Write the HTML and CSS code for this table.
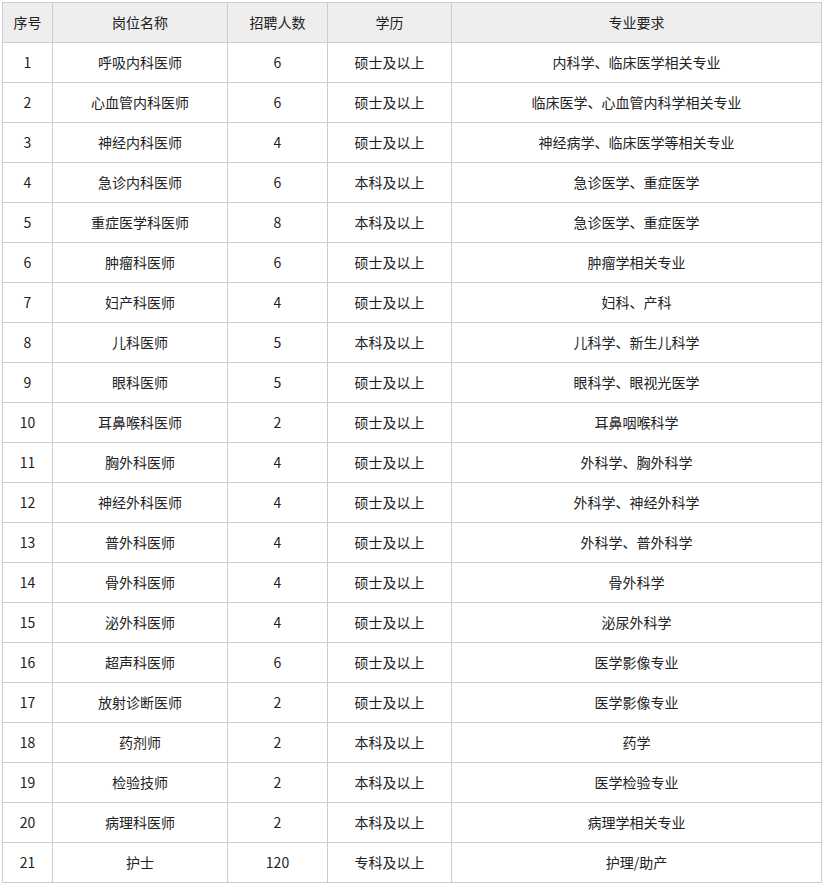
FILE: index.html
```html
<!DOCTYPE html>
<html lang="zh">
<head>
<meta charset="utf-8">
<link rel="stylesheet" href="styles.css">
</head>
<body>
<table class="jobs">
<colgroup>
<col class="c-no"><col class="c-name"><col class="c-num"><col class="c-edu"><col class="c-major">
</colgroup>
<thead>
<tr><th>序号</th><th>岗位名称</th><th>招聘人数</th><th>学历</th><th>专业要求</th></tr>
</thead>
<tbody>
<tr><td>1</td><td>呼吸内科医师</td><td>6</td><td>硕士及以上</td><td>内科学、临床医学相关专业</td></tr>
<tr><td>2</td><td>心血管内科医师</td><td>6</td><td>硕士及以上</td><td>临床医学、心血管内科学相关专业</td></tr>
<tr><td>3</td><td>神经内科医师</td><td>4</td><td>硕士及以上</td><td>神经病学、临床医学等相关专业</td></tr>
<tr><td>4</td><td>急诊内科医师</td><td>6</td><td>本科及以上</td><td>急诊医学、重症医学</td></tr>
<tr><td>5</td><td>重症医学科医师</td><td>8</td><td>本科及以上</td><td>急诊医学、重症医学</td></tr>
<tr><td>6</td><td>肿瘤科医师</td><td>6</td><td>硕士及以上</td><td>肿瘤学相关专业</td></tr>
<tr><td>7</td><td>妇产科医师</td><td>4</td><td>硕士及以上</td><td>妇科、产科</td></tr>
<tr><td>8</td><td>儿科医师</td><td>5</td><td>本科及以上</td><td>儿科学、新生儿科学</td></tr>
<tr><td>9</td><td>眼科医师</td><td>5</td><td>硕士及以上</td><td>眼科学、眼视光医学</td></tr>
<tr><td>10</td><td>耳鼻喉科医师</td><td>2</td><td>硕士及以上</td><td>耳鼻咽喉科学</td></tr>
<tr><td>11</td><td>胸外科医师</td><td>4</td><td>硕士及以上</td><td>外科学、胸外科学</td></tr>
<tr><td>12</td><td>神经外科医师</td><td>4</td><td>硕士及以上</td><td>外科学、神经外科学</td></tr>
<tr><td>13</td><td>普外科医师</td><td>4</td><td>硕士及以上</td><td>外科学、普外科学</td></tr>
<tr><td>14</td><td>骨外科医师</td><td>4</td><td>硕士及以上</td><td>骨外科学</td></tr>
<tr><td>15</td><td>泌外科医师</td><td>4</td><td>硕士及以上</td><td>泌尿外科学</td></tr>
<tr><td>16</td><td>超声科医师</td><td>6</td><td>硕士及以上</td><td>医学影像专业</td></tr>
<tr><td>17</td><td>放射诊断医师</td><td>2</td><td>硕士及以上</td><td>医学影像专业</td></tr>
<tr><td>18</td><td>药剂师</td><td>2</td><td>本科及以上</td><td>药学</td></tr>
<tr><td>19</td><td>检验技师</td><td>2</td><td>本科及以上</td><td>医学检验专业</td></tr>
<tr><td>20</td><td>病理科医师</td><td>2</td><td>本科及以上</td><td>病理学相关专业</td></tr>
<tr><td>21</td><td>护士</td><td>120</td><td>专科及以上</td><td>护理/助产</td></tr>
</tbody>
</table>
</body>
</html>
```
FILE: styles.css
```css
html, body {
  margin: 0;
  padding: 0;
  background: #fff;
}
body {
  padding: 2px;
  font-family: "Noto Sans CJK SC", "Liberation Sans", sans-serif;
  font-size: 14px;
  color: #222;
}
.jobs {
  border-collapse: collapse;
  table-layout: fixed;
  width: 819px;
}
.c-no { width: 50px; }
.c-name { width: 175px; }
.c-num { width: 100px; }
.c-edu { width: 124px; }
.c-major { width: 370px; }
.jobs th,
.jobs td {
  border: 1px solid #cccccc;
  height: 37px;
  padding: 0 0 2px;
  text-align: center;
  vertical-align: middle;
  font-weight: normal;
  line-height: 20px;
}
.jobs th {
  background: #eeeeee;
}
```
